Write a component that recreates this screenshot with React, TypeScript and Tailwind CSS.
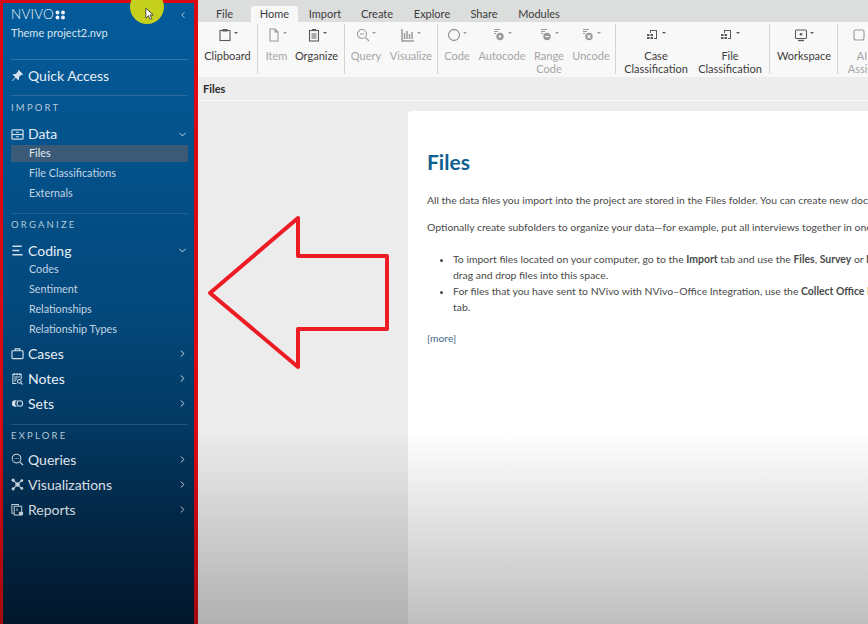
import React from "react";
import { ChevronDown, ChevronLeft, ChevronRight } from "lucide-react";

type Child = { children: React.ReactNode };

const Ico = ({ children, className = "w-[14px] h-[14px]" }: Child & { className?: string }) => (
  <svg viewBox="0 0 14 14" fill="none" stroke="currentColor" strokeWidth="1.1" className={className}>
    {children}
  </svg>
);

const Caret = () => <span className="ml-[2px] mb-[5px] w-0 h-0 border-x-[2px] border-x-transparent border-t-[2px] border-t-current" />;

// sidebar
const navIcons: Record<string, React.ReactNode> = {
  pin: (
    <g fill="currentColor" stroke="none">
      <path d="M8.3 1 13 5.7l-1 .9-.8-.3-2.6 2.4.1 2.4-.9.9-2.7-2.7L1.6 13 1 12.4l3.6-3.5L1.9 6.200l.9-.9 2.400.1 2.400-2.600-.3-.8z" />
    </g>
  ),
  data: (
    <>
      <rect x="1" y="2" width="12" height="10" rx="1" strokeWidth="1.300" />
      <path d="M1 7h12" strokeWidth="1.300" />
      <path d="M5.500 4.500h3M5.500 9.500h3" />
    </>
  ),
  coding: (
    <g strokeWidth="1.700">
      <path d="M1.500 2.500h10M1.500 7h7.500M1.500 11.500h11" />
    </g>
  ),
  cases: (
    <>
      <rect x="1" y="4" width="12" height="8.500" rx="1" strokeWidth="1.200" />
      <path d="M4.500 4V2h5v2" strokeWidth="1.200" />
    </>
  ),
  notes: (
    <>
      <path d="M6 12.500H2V2.500h9v5" />
      <path d="M3.500 1v2.500M6.500 1v2.500M9.500 1v2.500M3.500 5.500h6M3.500 7.500h3M3.500 9.500h2" />
      <circle cx="9" cy="10" r="2" />
      <path d="m10.500 11.500 2 2" />
    </>
  ),
  sets: (
    <>
      <path d="M4.500 3.500h3.500a3.500 3.500 0 0 0 0 7H4.500a3.500 3.500 0 0 1 0-7z" fill="currentColor" stroke="none" />
      <circle cx="9.500" cy="7" r="3" />
    </>
  ),
  queries: (
    <>
      <circle cx="6" cy="6" r="4.700" />
      <path d="m9.500 9.500 3.500 3.500" strokeWidth="1.300" />
      <path d="M4 6h.8M5.700 6h.8M7.400 6h.8" />
    </>
  ),
  viz: (
    <g fill="currentColor">
      <path d="M2.500 2.500 11.500 11.500M11.500 2.500 2.500 11.500" strokeWidth="1.200" />
      <circle cx="7" cy="7" r="2.400" stroke="none" />
      <circle cx="2.300" cy="2.300" r="1.700" stroke="none" />
      <circle cx="11.700" cy="2.800" r="1.500" stroke="none" />
      <circle cx="2.300" cy="11.700" r="1.700" stroke="none" />
      <circle cx="11.700" cy="11.200" r="1.500" stroke="none" />
    </g>
  ),
  reports: (
    <>
      <path d="M3 11H1V1.500h7V3" />
      <rect x="3.500" y="3.500" width="8" height="9.500" />
      <path d="M6.500 6v2.500" />
      <rect x="8.500" y="9.500" width="4.500" height="3.500" fill="currentColor" stroke="none" />
    </>
  ),
};

const NavRow = ({ icon, label, open, className = "h-[25px]" }: { icon: string; label: string; open?: boolean; className?: string }) => (
  <div className={`flex items-center pl-[8px] pr-[6px] text-[14px] text-[#e6eff6] ${className}`}>
    <Ico className="w-[13px] h-[13px] shrink-0 text-[#d3e0ea]">{navIcons[icon]}</Ico>
    <span className="ml-[4px] leading-none">{label}</span>
    {open === undefined ? null : open ? (
      <ChevronDown className="ml-auto w-[11px] h-[11px] text-[#dfe9f0]" strokeWidth={2} />
    ) : (
      <ChevronRight className="ml-auto w-[11px] h-[11px] text-[#dfe9f0]" strokeWidth={2} />
    )}
  </div>
);

const SubRow = ({ label, active }: { label: string; active?: boolean }) => (
  <div className="h-[20px] flex items-center pl-[8px] pr-[6px]">
    <div className={`h-[17px] w-full flex items-center pl-[18px] text-[10.800px] ${active ? "bg-[#3a5a78] text-[#e4ebf1]" : "text-[#c2d4e2]"}`}>
      {label}
    </div>
  </div>
);

const SectionLabel = ({ label, className }: { label: string; className: string }) => (
  <div className={`flex items-center pl-[8px] text-[9.500px] tracking-[2.200px] text-[#b4cad9] ${className}`}>{label}</div>
);

const Sidebar = () => (
  <aside className="w-[198px] h-[624px] shrink-0 border-t-[3px] border-l-[3px] border-r-[4px] border-[#dc0812] bg-linear-to-b from-[#045b9a] via-[#03487b] to-[#021f3a]">
    <div className="ml-[8px] mr-[6px] h-[57px] border-b border-[#2a74a8]">
      <div className="flex items-center h-[22px] pt-[1px]">
        <span className="text-[13.500px] font-light tracking-[0.200px] text-[#eef4f8] leading-none">NVIVO</span>
        <svg viewBox="0 0 11 10" className="w-[11px] h-[10px] ml-[1px] text-[#eef4f8]" fill="currentColor">
          <circle cx="2.500" cy="2.500" r="1.900" />
          <circle cx="8" cy="2.500" r="1.900" />
          <circle cx="2.500" cy="7.500" r="1.900" />
          <circle cx="8" cy="7.500" r="1.900" />
        </svg>
        <ChevronLeft className="ml-auto w-[10px] h-[10px] text-[#c9d9e5]" />
      </div>
      <div className="mt-[1px] text-[11px] leading-[14px] text-[#d8e5ef]">Theme project2.nvp</div>
    </div>

    <NavRow icon="pin" label="Quick Access" className="h-[36px] pb-[5px]" />
    <div className="ml-[8px] mr-[6px] border-b border-[#2a6b9c] -mt-px" />

    <SectionLabel label="IMPORT" className="h-[25px] mb-[4px]" />
    <NavRow icon="data" label="Data" open className="h-[18px]" />
    <SubRow label="Files" active />
    <SubRow label="File Classifications" />
    <SubRow label="Externals" />
    <div className="ml-[8px] mr-[6px] mt-[10px] border-b border-[#24608f]" />

    <SectionLabel label="ORGANIZE" className="h-[22px] mb-[6px]" />
    <NavRow icon="coding" label="Coding" open className="h-[17px]" />
    <SubRow label="Codes" />
    <SubRow label="Sentiment" />
    <SubRow label="Relationships" />
    <SubRow label="Relationship Types" />
    <div className="mt-[2px]">
      <NavRow icon="cases" label="Cases" open={false} />
      <NavRow icon="notes" label="Notes" open={false} />
      <NavRow icon="sets" label="Sets" open={false} />
    </div>
    <div className="ml-[8px] mr-[6px] mt-[8px] border-b border-[#1f5582]" />

    <SectionLabel label="EXPLORE" className="h-[22px]" />
    <NavRow icon="queries" label="Queries" open={false} />
    <NavRow icon="viz" label="Visualizations" open={false} />
    <NavRow icon="reports" label="Reports" open={false} />
  </aside>
);

// ribbon
const tabs = [
  { name: "File", w: "w-[53px]" },
  { name: "Home", w: "w-[47px]" },
  { name: "Import", w: "w-[54px]" },
  { name: "Create", w: "w-[50px]" },
  { name: "Explore", w: "w-[60px]" },
  { name: "Share", w: "w-[44px]" },
  { name: "Modules", w: "w-[66px]" },
];

const RibbonItem = ({ w, label, label2, icon, off }: { w: string; label: string; label2?: string; icon: React.ReactNode; off?: boolean }) => (
  <div className={`${w} shrink-0 flex flex-col items-center text-[11px] leading-[13px] ${off ? "text-[#a6a6a6]" : "text-[#3c3c3c]"}`}>
    <div className={`h-[14px] shrink-0 mt-[4px] mb-[7px] flex items-center ${off ? "text-[#9a9a9a]" : "text-[#5a5a5a]"}`}>
      <Ico>{icon}</Ico>
      <Caret />
    </div>
    <span className="whitespace-nowrap">{label}</span>
    {label2 ? <span className="whitespace-nowrap">{label2}</span> : null}
  </div>
);

const Group = ({ w, children, last }: Child & { w: string; last?: boolean }) => (
  <div className={`${w} shrink-0 flex h-[50px] ${last ? "" : "border-r border-[#d4d4d4]"}`}>{children}</div>
);

const codeIcon = (mark: React.ReactNode) => (
  <>
    <path d="M2 1.500h6M2 3.500h4M2 5.500h2" />
    <circle cx="8" cy="8.500" r="3.700" fill="currentColor" stroke="none" />
    {mark}
  </>
);

const classIcon = (
  <g fill="currentColor" stroke="none">
    <path d="M4 5V2h7v9H8v-1h2V3H5v2z" />
    <rect x="1" y="6" width="2.500" height="2" />
    <rect x="4.500" y="6" width="2.500" height="2" />
    <rect x="1" y="9" width="2.500" height="2" />
    <rect x="4.500" y="9" width="2.500" height="2" />
  </g>
);

const Ribbon = () => (
  <div className="h-[55px] bg-[#f8f8f8] flex pt-[2px] overflow-hidden">
    <Group w="w-[60px]">
      <RibbonItem w="w-[59px]" label="Clipboard" icon={<><rect x="2" y="2.500" width="10" height="10" /><rect x="4.500" y="1" width="5" height="2.500" fill="currentColor" stroke="none" /></>} />
    </Group>
    <Group w="w-[87px]">
      <RibbonItem w="w-[37px]" label="Item" off icon={<path d="M3 1h5l3 3v9H3zM8 1v3h3" />} />
      <RibbonItem w="w-[43px]" label="Organize" icon={<><rect x="2.500" y="2.500" width="9" height="10.500" /><path d="M5 1.500h4M4.500 6h5M4.500 8h5M4.500 10h5" /></>} />
    </Group>
    <Group w="w-[93px]">
      <RibbonItem w="w-[42px]" label="Query" off icon={<><circle cx="6" cy="6" r="4.500" /><path d="m9.500 9.500 3.500 3.500M4 6h4" /></>} />
      <RibbonItem w="w-[48px]" label="Visualize" off icon={<path d="M1 1v12h12M3.500 5v6M6 3v8M8.500 6v5M11 4v7" strokeWidth="1.500" />} />
    </Group>
    <Group w="w-[178px]">
      <RibbonItem w="w-[38px]" label="Code" off icon={<circle cx="7" cy="7" r="5.500" strokeWidth="1.300" />} />
      <RibbonItem w="w-[52px]" label="Autocode" off icon={codeIcon(<path d="m7 6.800 2.500 1.700L7 10.200z" fill="#f8f8f8" stroke="none" />)} />
      <RibbonItem w="w-[42px]" label="Range" label2="Code" off icon={codeIcon(<path d="M6 8.500h4" stroke="#f8f8f8" />)} />
      <RibbonItem w="w-[42px]" label="Uncode" off icon={codeIcon(<path d="m6.500 7 3 3M9.500 7l-3 3" stroke="#f8f8f8" />)} />
    </Group>
    <Group w="w-[154px]">
      <RibbonItem w="w-[80px]" label="Case" label2="Classification" icon={classIcon} />
      <RibbonItem w="w-[68px]" label="File" label2="Classification" icon={classIcon} />
    </Group>
    <Group w="w-[68px]">
      <RibbonItem w="w-[68px]" label="Workspace" icon={<><rect x="1.500" y="2" width="11" height="8.500" rx="1" /><circle cx="7" cy="6.200" r="1.300" fill="currentColor" stroke="none" /><path d="M4 12.500h6" strokeWidth="1.400" /></>} />
    </Group>
    <Group w="w-[50px]" last>
      <RibbonItem w="w-[48px]" label="AI" label2="Assist" off icon={<rect x="2" y="2" width="10" height="10" rx="2" />} />
    </Group>
  </div>
);

const Content = () => (
  <div className="bg-[#ececec] h-[524px] border-t border-[#f7f7f7] pt-[10px] pl-[210px]">
    <div className="bg-white h-[600px] w-[700px] rounded-tl-[4px] pl-[19px] pt-[38px] text-[10.420px] text-[#4a4a4a] whitespace-nowrap">
      <h1 className="text-[21px] leading-[26px] font-bold text-[#10608f]">Files</h1>
      <p className="mt-[17px] leading-[16px]">All the data files you import into the project are stored in the Files folder. You can create new documents and memos here as well.</p>
      <p className="mt-[11px] leading-[16px]">Optionally create subfolders to organize your data—for example, put all interviews together in one folder.</p>
      <ul className="mt-[16px] pl-[26px] list-disc leading-[16px]">
        <li>
          To import files located on your computer, go to the <b>Import</b> tab and use the <b>Files</b>, <b>Survey</b> or <b>NVivo</b> commands, or
          <br />
          drag and drop files into this space.
        </li>
        <li>
          For files that you have sent to NVivo with NVivo–Office Integration, use the <b>Collect Office Files</b> command on the Home
          <br />
          tab.
        </li>
      </ul>
      <p className="mt-[15px] leading-[16px] text-[#4a6a85]">[more]</p>
    </div>
  </div>
);

export default function App() {
  return (
    <div className="relative w-[868px] h-[624px] overflow-hidden flex bg-[#ececec] font-[Lato,sans-serif]">
      <Sidebar />

      <main className="flex-1 min-w-0 overflow-hidden">
        <div className="h-[22px] bg-[#dcdddd] flex items-end text-[11px] text-[#3c3c3c]">
          {tabs.map((t) => (
            <div key={t.name} className={`${t.w} shrink-0 h-[16px] flex items-center justify-center ${t.name === "Home" ? "bg-[#f8f8f8] rounded-t-[2px]" : ""}`}>
              {t.name}
            </div>
          ))}
        </div>
        <Ribbon />
        <div className="h-[23px] flex items-center pl-[5px] pt-[1px] text-[11px] font-bold text-[#2b2b2b] bg-[#ededed]">Files</div>
        <Content />
      </main>

      {/* red annotation arrow drawn on the video */}
      <svg viewBox="0 0 190 160" className="absolute left-[205px] top-[213px] w-[190px] h-[160px]" fill="none" stroke="#ed1c24" strokeWidth="4" strokeLinejoin="round">
        <path d="M5 80 93 5v38h89v73H93v38z" />
      </svg>

      {/* pointer highlight */}
      <div className="absolute left-[130px] -top-[10px] w-[34px] h-[34px] rounded-full bg-[#c4d01c]" />
      <svg viewBox="0 0 12 16" className="absolute left-[145px] top-[7px] w-[10px] h-[14px]">
        <path d="M1 1v12l3-3 2 4.500 2-1-2-4.300h4z" fill="#fff" stroke="#333" strokeWidth="1" />
      </svg>

      {/* player fade at the bottom */}
      <div className="absolute left-0 right-0 top-[430px] h-[194px] pointer-events-none bg-linear-to-b from-transparent to-black/25" />
    </div>
  );
}
